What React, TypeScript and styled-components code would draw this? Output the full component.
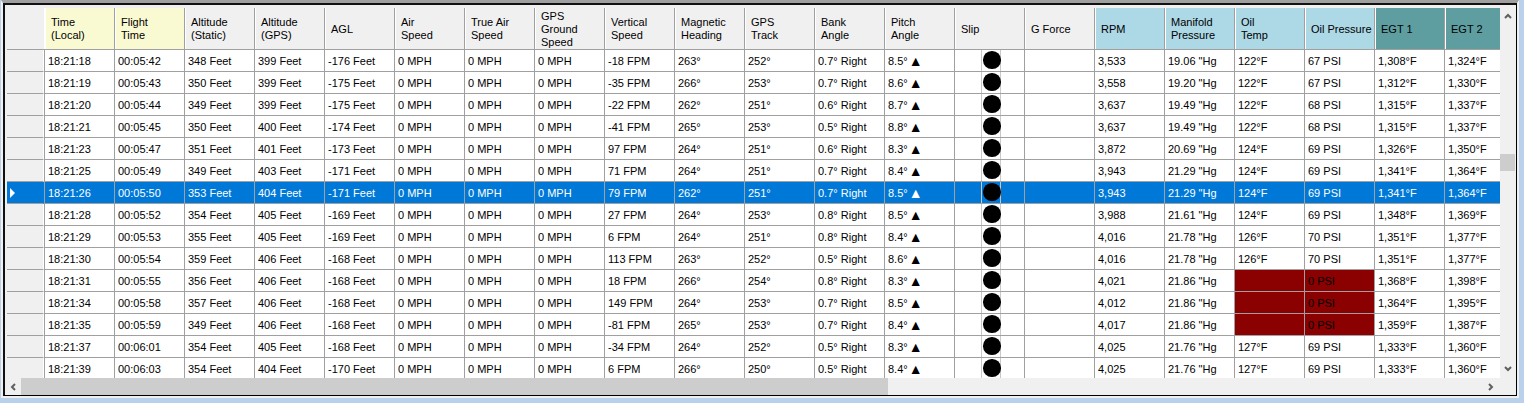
import React from 'react';
import styled, { createGlobalStyle } from 'styled-components';

const GlobalStyle = createGlobalStyle`
    html, body {
        margin: 0;
        padding: 0;
        background: #b9d1ea;
    }
    body {
        font-family: "Liberation Sans", Arial, sans-serif;
        font-size: 11px;
        overflow: hidden;
    }
`;

const GRID_LINE = '#a0a0a0';
const COLUMN_WIDTH = 70;

type Tone = 'plain' | 'time' | 'engine' | 'exhaust';

const HEADER_COLORS: Record<Tone, string> = {
    plain: '#f0f0f0',
    time: '#fafad2',
    engine: '#add8e6',
    exhaust: '#5f9ea0',
};

const COLUMNS: { title: string[]; tone: Tone }[] = [
    { title: ['Time', '(Local)'], tone: 'time' },
    { title: ['Flight', 'Time'], tone: 'time' },
    { title: ['Altitude', '(Static)'], tone: 'plain' },
    { title: ['Altitude', '(GPS)'], tone: 'plain' },
    { title: ['AGL'], tone: 'plain' },
    { title: ['Air', 'Speed'], tone: 'plain' },
    { title: ['True Air', 'Speed'], tone: 'plain' },
    { title: ['GPS', 'Ground', 'Speed'], tone: 'plain' },
    { title: ['Vertical', 'Speed'], tone: 'plain' },
    { title: ['Magnetic', 'Heading'], tone: 'plain' },
    { title: ['GPS', 'Track'], tone: 'plain' },
    { title: ['Bank', 'Angle'], tone: 'plain' },
    { title: ['Pitch', 'Angle'], tone: 'plain' },
    { title: ['Slip'], tone: 'plain' },
    { title: ['G Force'], tone: 'plain' },
    { title: ['RPM'], tone: 'engine' },
    { title: ['Manifold', 'Pressure'], tone: 'engine' },
    { title: ['Oil', 'Temp'], tone: 'engine' },
    { title: ['Oil Pressure'], tone: 'engine' },
    { title: ['EGT 1'], tone: 'exhaust' },
    { title: ['EGT 2'], tone: 'exhaust' },
];

// time, flight, static, gps, agl, vs, mag, track, bank, pitch, rpm, manifold, oil temp, oil psi, egt1, egt2
type Sample = [string, string, number, number, number, number, number, number, string, string, string, string, number | null, number, string, string];

const SAMPLES: Sample[] = [
    ['18:21:18', '00:05:42', 348, 399, -176, -18, 263, 252, '0.7', '8.5', '3,533', '19.06', 122, 67, '1,308', '1,324'],
    ['18:21:19', '00:05:43', 350, 399, -175, -35, 266, 253, '0.7', '8.6', '3,558', '19.20', 122, 67, '1,312', '1,330'],
    ['18:21:20', '00:05:44', 349, 399, -175, -22, 262, 251, '0.6', '8.7', '3,637', '19.49', 122, 68, '1,315', '1,337'],
    ['18:21:21', '00:05:45', 350, 400, -174, -41, 265, 253, '0.5', '8.8', '3,637', '19.49', 122, 68, '1,315', '1,337'],
    ['18:21:23', '00:05:47', 351, 401, -173, 97, 264, 251, '0.6', '8.3', '3,872', '20.69', 124, 69, '1,326', '1,350'],
    ['18:21:25', '00:05:49', 349, 403, -171, 71, 264, 251, '0.7', '8.4', '3,943', '21.29', 124, 69, '1,341', '1,364'],
    ['18:21:26', '00:05:50', 353, 404, -171, 79, 262, 251, '0.7', '8.5', '3,943', '21.29', 124, 69, '1,341', '1,364'],
    ['18:21:28', '00:05:52', 354, 405, -169, 27, 264, 253, '0.8', '8.5', '3,988', '21.61', 124, 69, '1,348', '1,369'],
    ['18:21:29', '00:05:53', 355, 405, -169, 6, 264, 251, '0.8', '8.4', '4,016', '21.78', 126, 70, '1,351', '1,377'],
    ['18:21:30', '00:05:54', 359, 406, -168, 113, 263, 252, '0.5', '8.6', '4,016', '21.78', 126, 70, '1,351', '1,377'],
    ['18:21:31', '00:05:55', 356, 406, -168, 18, 266, 254, '0.8', '8.3', '4,021', '21.86', null, 0, '1,368', '1,398'],
    ['18:21:34', '00:05:58', 357, 406, -168, 149, 264, 253, '0.7', '8.5', '4,012', '21.86', null, 0, '1,364', '1,395'],
    ['18:21:35', '00:05:59', 349, 406, -168, -81, 265, 253, '0.7', '8.4', '4,017', '21.86', null, 0, '1,359', '1,387'],
    ['18:21:37', '00:06:01', 354, 405, -168, -34, 264, 252, '0.5', '8.3', '4,025', '21.76', 127, 69, '1,333', '1,360'],
    ['18:21:39', '00:06:03', 354, 404, -170, 6, 266, 250, '0.5', '8.4', '4,025', '21.76', 127, 69, '1,333', '1,360'],
];

const SELECTED_ROW = 6;

const Page = styled.div`
    width: 1524px;
    height: 403px;
    padding: 0 5px 5px 1px;
    box-sizing: border-box;
`;

const WindowEdge = styled.div`
    height: 100%;
    box-sizing: border-box;
    border-top: 3px solid #a0a0a0;
    border-left: 2px solid #f0f0f0;
    border-right: 2px solid #f0f0f0;
    border-bottom: 2px solid #f0f0f0;
`;

const Frame = styled.div`
    height: 100%;
    box-sizing: border-box;
    border-top: 2px solid #111;
    border-left: 2px solid #111;
    border-right: 1px solid #000;
    border-bottom: 1px solid #000;
    padding: 3px 0 0 2px;
    background: #f0f0f0;
    display: flex;
    flex-direction: column;
`;

const Body = styled.div`
    display: flex;
    height: 370px;
`;

const Grid = styled.div`
    width: 1493px;
    height: 370px;
    overflow: hidden;
    background: #fff;
`;

const HeaderRow = styled.div`
    display: flex;
    height: 42px;
    width: max-content;
    border-bottom: 1px solid ${GRID_LINE};
    box-sizing: border-box;
    background: #fff;
`;

const RowHeaderTop = styled.div`
    width: 38px;
    flex: none;
    box-sizing: border-box;
    background: #f0f0f0;
    border-right: 1px solid #fff;
`;

const HeaderCell = styled.div<{ $tone: Tone }>`
    width: ${COLUMN_WIDTH}px;
    flex: none;
    box-sizing: border-box;
    padding: 1px 0 0 5px;
    display: flex;
    flex-direction: column;
    justify-content: center;
    line-height: 13px;
    color: #000;
    background: ${(p) => HEADER_COLORS[p.$tone]};
    border-left: 1px solid #fff;
    border-right: 1px solid ${GRID_LINE};
`;

const Row = styled.div<{ $selected: boolean }>`
    display: flex;
    height: 22px;
    width: max-content;
    color: ${(p) => (p.$selected ? '#fff' : '#000')};
    background: ${(p) => (p.$selected ? '#0078d7' : '#fff')};
`;

const RowHeader = styled.div<{ $selected: boolean }>`
    width: 37px;
    flex: none;
    box-sizing: border-box;
    display: flex;
    align-items: center;
    padding-left: 3px;
    background: ${(p) => (p.$selected ? '#0078d7' : '#f0f0f0')};
    border-bottom: 1px solid ${GRID_LINE};
    border-right: 1px solid ${(p) => (p.$selected ? '#0078d7' : '#fff')};
`;

const RowMarker = styled.span`
    width: 0;
    height: 0;
    border-left: 5px solid #fff;
    border-top: 5px solid transparent;
    border-bottom: 5px solid transparent;
`;

const RowHeaderGap = styled.div`
    width: 1px;
    flex: none;
    background: ${GRID_LINE};
`;

const Cell = styled.div<{ $alert?: boolean }>`
    width: ${COLUMN_WIDTH}px;
    flex: none;
    box-sizing: border-box;
    padding: 1px 0 0 3px;
    display: flex;
    align-items: center;
    white-space: pre;
    border-right: 1px solid ${GRID_LINE};
    border-bottom: 1px solid ${GRID_LINE};
    ${(p) => p.$alert && 'background: #8b0000; color: #000;'}
`;

const PitchMark = styled.span`
    font-size: 14px;
    line-height: 14px;
    margin-left: 1px;
`;

const SlipCell = styled(Cell)`
    padding: 0 0 0 26px;
    align-items: flex-start;
    overflow: hidden;
`;

const SlipImage = styled.div`
    width: 20px;
    height: 21px;
    flex: none;
    box-sizing: border-box;
    border-left: 1px solid #c8c8c8;
    border-right: 1px solid #c8c8c8;
`;

const SlipBall = styled.div`
    width: 17.5px;
    height: 17.5px;
    margin: 1px 0 0 1px;
    border-radius: 50%;
    background: #000;
`;

const VerticalBar = styled.div`
    width: 16px;
    height: 370px;
    box-sizing: border-box;
    padding-bottom: 2px;
    background: #f0f0f0;
    display: flex;
    flex-direction: column;
    justify-content: space-between;
    position: relative;
`;

const VerticalThumb = styled.div`
    position: absolute;
    top: 146px;
    left: 0;
    width: 15px;
    height: 17px;
    background: #cdcdcd;
`;

const ArrowBox = styled.div`
    height: 15px;
    padding-right: 1px;
    display: flex;
    align-items: center;
    justify-content: center;
`;

const HorizontalBar = styled.div`
    height: 17px;
    display: flex;
    align-items: stretch;
    background: #f0f0f0;
`;

const SideArrow = styled.div<{ $end?: boolean }>`
    width: 14px;
    flex: none;
    box-sizing: border-box;
    padding: ${(p) => (p.$end ? '0 0 0 3px' : '0 3px 0 0')};
    display: flex;
    align-items: center;
    justify-content: center;
`;

const HorizontalThumb = styled.div`
    width: 867px;
    flex: none;
    background: #cdcdcd;
`;

const TrackRest = styled.div`
    width: 594px;
    flex: none;
`;

const Chevron: React.FC<{ points: string }> = ({ points }) => (
    <svg width="10" height="10" viewBox="0 0 10 10" fill="none">
        <polyline points={points} stroke="#606060" strokeWidth="2" />
    </svg>
);

const App: React.FC = () => {
    return (
        <Page>
            <GlobalStyle />
            <WindowEdge>
                <Frame>
                    <Body>
                        <Grid>
                            <HeaderRow>
                                <RowHeaderTop />
                                {COLUMNS.map((col) => (
                                    <HeaderCell key={col.title.join(' ')} $tone={col.tone}>
                                        {col.title.map((line) => (
                                            <span key={line}>{line}</span>
                                        ))}
                                    </HeaderCell>
                                ))}
                            </HeaderRow>
                            {SAMPLES.map((s, i) => {
                                const selected = i === SELECTED_ROW;
                                return (
                                    <Row key={s[0]} $selected={selected}>
                                        <RowHeader $selected={selected}>{selected && <RowMarker />}</RowHeader>
                                        <RowHeaderGap />
                                        <Cell>{s[0]}</Cell>
                                        <Cell>{s[1]}</Cell>
                                        <Cell>{s[2]} Feet</Cell>
                                        <Cell>{s[3]} Feet</Cell>
                                        <Cell>{s[4]} Feet</Cell>
                                        <Cell>0 MPH</Cell>
                                        <Cell>0 MPH</Cell>
                                        <Cell>0 MPH</Cell>
                                        <Cell>{s[5]} FPM</Cell>
                                        <Cell>{s[6]}°</Cell>
                                        <Cell>{s[7]}°</Cell>
                                        <Cell>{s[8]}° Right</Cell>
                                        <Cell>
                                            {s[9]}°<PitchMark>▲</PitchMark>
                                        </Cell>
                                        <SlipCell>
                                            <SlipImage>
                                                <SlipBall />
                                            </SlipImage>
                                        </SlipCell>
                                        <Cell />
                                        <Cell>{s[10]}</Cell>
                                        <Cell>{s[11]} "Hg</Cell>
                                        <Cell $alert={s[12] === null}>{s[12] === null ? '' : `${s[12]}°F`}</Cell>
                                        <Cell $alert={s[13] === 0}>{s[13]} PSI</Cell>
                                        <Cell>{s[14]}°F</Cell>
                                        <Cell>{s[15]}°F</Cell>
                                    </Row>
                                );
                            })}
                        </Grid>
                        <VerticalBar>
                            <ArrowBox>
                                <Chevron points="2,7 5,4 8,7" />
                            </ArrowBox>
                            <VerticalThumb />
                            <ArrowBox>
                                <Chevron points="2,3 5,6 8,3" />
                            </ArrowBox>
                        </VerticalBar>
                    </Body>
                    <HorizontalBar>
                        <SideArrow>
                            <Chevron points="7,2 4,5 7,8" />
                        </SideArrow>
                        <HorizontalThumb />
                        <TrackRest />
                        <SideArrow $end>
                            <Chevron points="3,2 6,5 3,8" />
                        </SideArrow>
                    </HorizontalBar>
                </Frame>
            </WindowEdge>
        </Page>
    );
};

export default App;
